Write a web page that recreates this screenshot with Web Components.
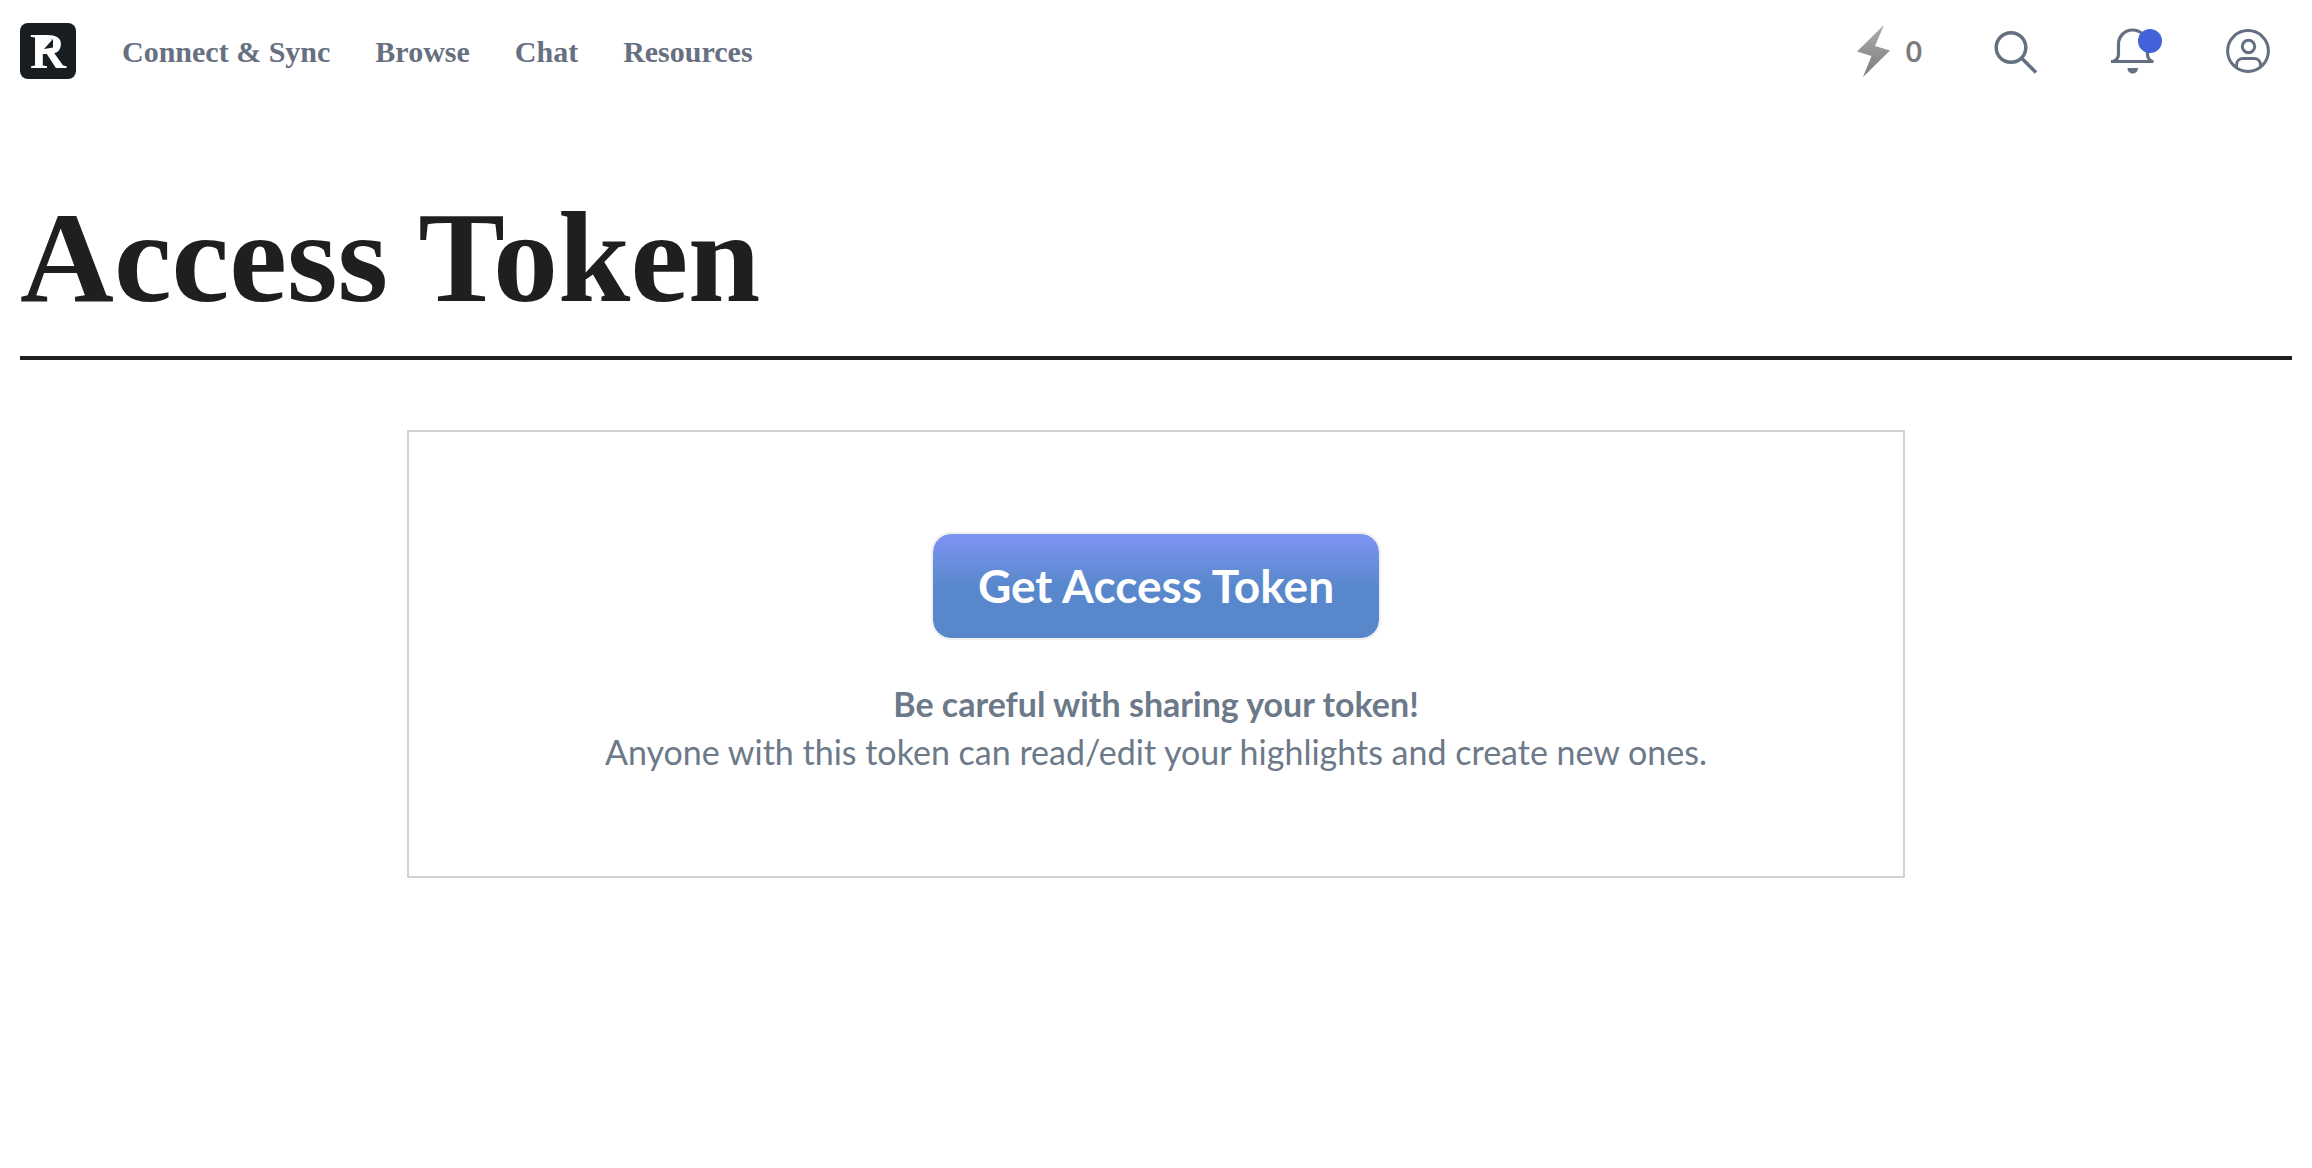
<!DOCTYPE html>
<html lang="en">
<head>
<meta charset="utf-8">
<title>Access Token</title>
<style>
  body { margin: 0; background: #fff; color: #1f1f1f; font-family: Lato, "Open Sans", sans-serif; }
</style>
</head>
<body>
<app-shell>
  <site-header slot="header">
    <brand-logo slot="brand"></brand-logo>
    <nav-link href="#connect">Connect &amp; Sync</nav-link>
    <nav-link href="#browse">Browse</nav-link>
    <nav-link href="#chat">Chat</nav-link>
    <nav-link href="#resources">Resources</nav-link>
    <header-tools slot="tools"></header-tools>
  </site-header>
  <page-title>Access Token</page-title>
  <token-card>
    <primary-button slot="action">Get Access Token</primary-button>
    <strong slot="warning">Be careful with sharing your token!</strong>
    Anyone with this token can read/edit your highlights and create new ones.
  </token-card>
</app-shell>
<script>
  function define(name, markup) {
    customElements.define(name, class extends HTMLElement {
      constructor() {
        super();
        this.attachShadow({ mode: "open" }).innerHTML = markup;
      }
      connectedCallback() {
        const link = this.shadowRoot.querySelector("a[data-forward]");
        if (link) link.href = this.getAttribute("href");
      }
    });
  }

  define("app-shell", `
    <style>
      :host { display: block; padding: 0 20px; }
      main { display: block; }
    </style>
    <slot name="header"></slot>
    <main><slot></slot></main>`);

  define("site-header", `
    <style>
      :host { display: block; }
      header { display: flex; align-items: center; justify-content: space-between; height: 102px; }
      .left { display: flex; align-items: center; gap: 46px; }
      nav { display: flex; align-items: center; gap: 45px; padding-top: 2px; }
    </style>
    <header>
      <div class="left">
        <slot name="brand"></slot>
        <nav aria-label="Main"><slot></slot></nav>
      </div>
      <slot name="tools"></slot>
    </header>`);

  define("brand-logo", `
    <style>
      :host { display: block; }
      a, svg { display: block; }
      text { font: bold 50px "Liberation Serif", serif; }
    </style>
    <a href="#home" aria-label="Home">
      <svg width="56" height="56" viewBox="0 0 56 56">
        <rect width="56" height="56" rx="8" fill="#171d21"/>
        <text x="10" y="45" fill="#fff">R</text>
        <path d="M20 14H28L34 18V26L29 30H20Z" fill="#fff"/>
        <path d="M33 16V24.500L24 26Z" fill="#171d21"/>
      </svg>
    </a>`);

  define("nav-link", `
    <style>
      :host { display: block; }
      a { color: #667080; font: bold 30px/40px "Liberation Serif", serif; text-decoration: none; white-space: nowrap; }
    </style>
    <a data-forward><slot></slot></a>`);

  define("header-tools", `
    <style>
      :host { display: flex; align-items: center; gap: 72px; padding-right: 22px; }
      button { display: block; position: relative; margin: 0; padding: 0; border: 0; background: none; color: #647082; }
      svg { display: block; fill: none; stroke: currentColor; }
      .streak { display: flex; align-items: center; gap: 16px; color: #7b7b7b; font: bold 28px/40px Lato, sans-serif; }
      .dot { position: absolute; top: 1px; right: -8px; width: 24px; height: 24px; border-radius: 50%; background: #4361d8; }
    </style>
    <div class="streak">
      <svg width="33" height="52" viewBox="0 0 33 52">
        <defs><linearGradient id="g" x1="0" y1="0" x2="0" y2="1">
          <stop offset="0" stop-color="#adadad"/><stop offset="1" stop-color="#7c7c7c"/>
        </linearGradient></defs>
        <path d="M27 0L18 21L33 25.500L6 52L14.500 31L0 26.500Z" fill="url(#g)" stroke="none"/>
      </svg>
      <span>0</span>
    </div>
    <button aria-label="Search">
      <svg width="44" height="46" viewBox="0 0 44 46" stroke-width="3.500">
        <circle cx="17" cy="19.500" r="14.800"/><path d="M27.500 30L42 44.500"/>
      </svg>
    </button>
    <button aria-label="Notifications">
      <svg width="44" height="46" viewBox="0 0 44 46" stroke-width="3.200">
        <path d="M1 33.500H43.500M3 33.500C7 32 8.500 30 8.500 26V16C8.500 8 15 2 22.500 2S37.500 8 37.500 16V26C37.500 30 39 32 42 33.500"/>
        <path d="M17.500 40H28C28 43 26 45.500 22.700 45.500S17.500 43 17.500 40Z" fill="currentColor" stroke="none"/>
      </svg>
      <span class="dot"></span>
    </button>
    <button aria-label="Account">
      <svg width="44" height="44" viewBox="0 0 44 44" stroke-width="3">
        <circle cx="22" cy="22" r="20.400"/>
        <circle cx="22.500" cy="17.500" r="6.200"/>
        <path d="M10.500 39V36C10.500 32 13.500 29.500 17 29.500H28C32 29.500 34.500 32 34.500 36V38.500"/>
      </svg>
    </button>`);

  define("page-title", `
    <style>
      :host { display: block; padding: 84px 0 28px; border-bottom: 4px solid #1f1f1f; }
      h1 { margin: 0; color: #1f1f1f; font: bold 130px/142px "Liberation Serif", serif; }
    </style>
    <h1><slot></slot></h1>`);

  define("token-card", `
    <style>
      :host { display: flex; flex-direction: column; align-items: center; gap: 40px; box-sizing: border-box;
              max-width: 1498px; margin: 70px auto 0; padding: 100px 40px; border: 2px solid #d1d1d6; }
      p { margin: 0; color: #6c7988; font-size: 34px; line-height: 48px; text-align: center; }
      ::slotted(strong) { display: block; }
    </style>
    <slot name="action"></slot>
    <p><slot name="warning"></slot><slot></slot></p>`);

  define("primary-button", `
    <style>
      :host { display: block; }
      button { display: block; margin: 0; padding: 26px 45px; border: 2px solid #f0f0f2; border-radius: 20px;
               background: linear-gradient(#7b93f0 0%, #7b93f0 5%, #5888cb 50%, #5888cb 100%) padding-box;
               color: #fff; font: bold 46px/52px Lato, sans-serif; white-space: nowrap; }
    </style>
    <button type="button"><slot></slot></button>`);
</script>
</body>
</html>
